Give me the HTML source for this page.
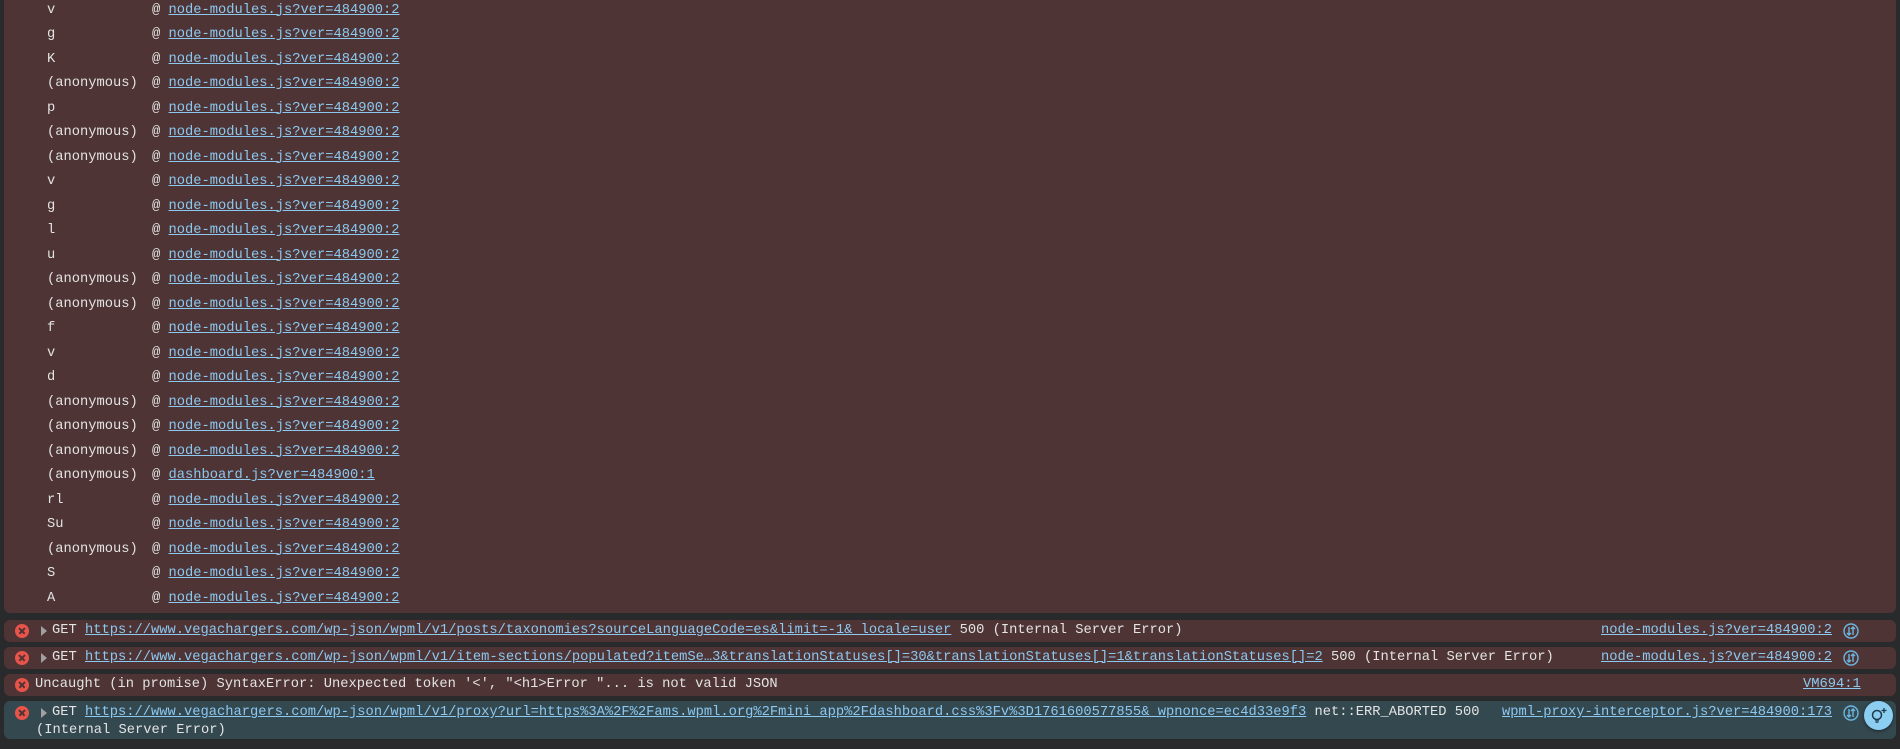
<!DOCTYPE html>
<html><head><meta charset="utf-8"><style>
*{margin:0;padding:0;box-sizing:border-box}
body{width:1900px;height:749px;background:#282a2c;overflow:hidden;position:relative;font-family:"Liberation Mono",monospace;font-size:13.75px;color:#e3e3e3}
.blk{position:absolute;left:4px;right:4px;background:#4e3434;border-radius:6px}
.t{position:absolute;white-space:pre;line-height:17px}
a{color:#8cc8f0;text-decoration:underline}
.r{position:absolute;white-space:pre;line-height:17px;height:17px}
.x{position:absolute;width:14px;height:14px;border-radius:50%;background:#e8544a}
.x::before,.x::after{content:"";position:absolute;left:3px;top:6.3px;width:8px;height:1.5px;background:#4e3434;transform:rotate(45deg)}
.x::after{transform:rotate(-45deg)}
.tri{position:absolute;width:0;height:0;border-left:6px solid #a0a0a0;border-top:5px solid transparent;border-bottom:5px solid transparent}
.ic{position:absolute;width:16px;height:16px}
</style></head><body>
<div class="blk" style="top:-10px;height:623px;border-radius:0 0 6px 6px"></div>
<div id="stack"></div>
<script>
var n=["v","g","K","(anonymous)","p","(anonymous)","(anonymous)","v","g","l","u","(anonymous)","(anonymous)","f","v","d","(anonymous)","(anonymous)","(anonymous)","(anonymous)","rl","Su","(anonymous)","S","A"];
var h="";
for(var i=0;i<n.length;i++){var y=10+i*24.5-8.5;var f=(i==19)?"dashboard.js?ver=484900:1":"node-modules.js?ver=484900:2";
h+='<div class="t" style="left:47px;top:'+y+'px">'+n[i]+'</div><div class="t" style="left:152px;top:'+y+'px">@ <a>'+f+'</a></div>';}
document.getElementById("stack").innerHTML=h;
</script>

<div class="blk" style="top:620px;height:22px"></div>
<div class="blk" style="top:647px;height:22px"></div>
<div class="blk" style="top:674px;height:22px"></div>
<div class="blk" style="top:701px;height:38px;background:#344850"></div>

<div class="x" style="left:15px;top:624px"></div>
<div class="tri" style="left:41px;top:626px"></div>
<div class="r" style="left:52px;top:622px">GET <a>https://www.vegachargers.com/wp-json/wpml/v1/posts/taxonomies?sourceLanguageCode=es&amp;limit=-1&amp;_locale=user</a> 500 (Internal Server Error)</div>
<div class="r" style="left:1601px;top:622px"><a>node-modules.js?ver=484900:2</a></div>

<div class="x" style="left:15px;top:651px"></div>
<div class="tri" style="left:41px;top:653px"></div>
<div class="r" style="left:52px;top:649px">GET <a>https://www.vegachargers.com/wp-json/wpml/v1/item-sections/populated?itemSe…3&amp;translationStatuses[]=30&amp;translationStatuses[]=1&amp;translationStatuses[]=2</a> 500 (Internal Server Error)</div>
<div class="r" style="left:1601px;top:649px"><a>node-modules.js?ver=484900:2</a></div>

<div class="x" style="left:15px;top:678px"></div>
<div class="r" style="left:35px;top:676px">Uncaught (in promise) SyntaxError: Unexpected token '&lt;', "&lt;h1&gt;Error "... is not valid JSON</div>
<div class="r" style="left:1803px;top:676px"><a>VM694:1</a></div>

<div class="x" style="left:15px;top:706px"></div>
<div class="tri" style="left:41px;top:708px"></div>
<div class="r" style="left:52px;top:704px">GET <a>https://www.vegachargers.com/wp-json/wpml/v1/proxy?url=https%3A%2F%2Fams.wpml.org%2Fmini_app%2Fdashboard.css%3Fv%3D1761600577855&amp;_wpnonce=ec4d33e9f3</a> net::ERR_ABORTED 500</div>
<div class="r" style="left:36px;top:722px">(Internal Server Error)</div>
<div class="r" style="left:1502px;top:704px"><a>wpml-proxy-interceptor.js?ver=484900:173</a></div>

<svg class="ic" style="left:1843px;top:623px" viewBox="0 0 16 16" fill="none" stroke="#6bb6e0" stroke-width="1.4"><circle cx="8" cy="8" r="7"/><path d="M6 4v8M4 10l2 2 2-2M10 12V4M8 6l2-2 2 2"/></svg>
<svg class="ic" style="left:1843px;top:650px" viewBox="0 0 16 16" fill="none" stroke="#6bb6e0" stroke-width="1.4"><circle cx="8" cy="8" r="7"/><path d="M6 4v8M4 10l2 2 2-2M10 12V4M8 6l2-2 2 2"/></svg>
<svg class="ic" style="left:1843px;top:705px" viewBox="0 0 16 16" fill="none" stroke="#6bb6e0" stroke-width="1.4"><circle cx="8" cy="8" r="7"/><path d="M6 4v8M4 10l2 2 2-2M10 12V4M8 6l2-2 2 2"/></svg>

<div style="position:absolute;left:1864px;top:701px;width:29px;height:29px;border-radius:50%;background:#8ccdf2;box-shadow:0 1px 3px rgba(0,0,0,.5)"></div>
<svg style="position:absolute;left:1864px;top:701px" width="29" height="29" viewBox="0 0 29 29" fill="none" stroke="#1e3a4a" stroke-width="1.5"><circle cx="13" cy="14" r="4.5"/><path d="M11 19h4M11.5 21h3"/><path d="M20 7v5M17.5 9.5h5" stroke-width="1.3"/></svg>
</body></html>
